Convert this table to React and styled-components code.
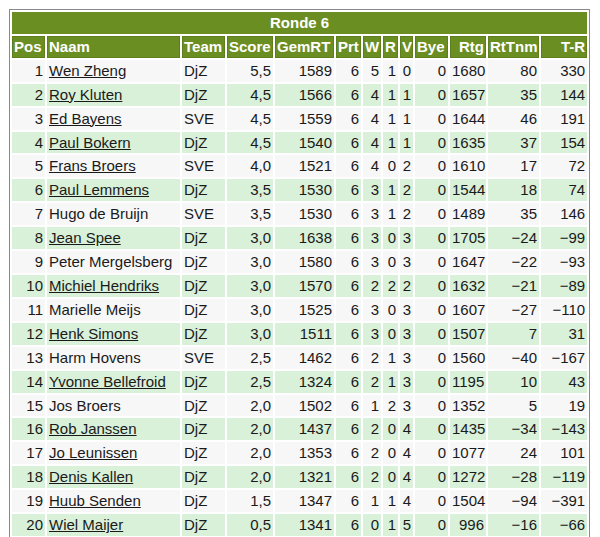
import React from "react";
import styled, { createGlobalStyle } from "styled-components";

const Global = createGlobalStyle`
  html, body { margin: 0; padding: 0; background: #ffffff; }
  body { font-family: "Liberation Sans", Arial, sans-serif; font-size: 15px; color: #1a1a1a; }
`;

const Frame = styled.div`
  margin: 9px 0 0 9px;
  width: 579px;
  border: 1px solid #8a8a8a;
  background: #ffffff;
`;

const Table = styled.table`
  width: 100%;
  table-layout: fixed;
  border-collapse: separate;
  border-spacing: 2px;
  font-size: 15px;
  line-height: 17.9px;
`;

const TitleCell = styled.th`
  background: #6b8e23;
  color: #ffffff;
  font-weight: bold;
  text-align: center;
  padding: 2px;
`;

const HeadCell = styled.th`
  background: #6b8e23;
  color: #ffffff;
  font-weight: bold;
  text-align: ${(p) => p.$align || "left"};
  padding: 1px 1px;
  border: 1px solid #5f7f1c;
  white-space: nowrap;
  overflow: hidden;
`;

const Row = styled.tr`
  background: ${(p) => (p.$even ? "#d9f0d9" : "#f7f7f7")};
`;

const Cell = styled.td`
  padding: 2px 2px;
  text-align: ${(p) => p.$align || "right"};
  white-space: nowrap;
  overflow: hidden;
`;

const PlayerLink = styled.a`
  color: #1a1a1a;
  text-decoration: underline;
`;

const widths = [33, 133, 43, 46, 59, 25, 18, 15, 13, 33, 36, 51, 46];

const headers = [
  ["Pos", "left"],
  ["Naam", "left"],
  ["Team", "left"],
  ["Score", "left"],
  ["GemRT", "left"],
  ["Prt", "left"],
  ["W", "left"],
  ["R", "left"],
  ["V", "left"],
  ["Bye", "left"],
  ["Rtg", "right"],
  ["RtTnm", "left"],
  ["T-R", "right"],
];

const M = "\u2212";

const rows = [
  [1, "Wen Zheng", true, "DjZ", "5,5", 1589, 6, 5, 1, 0, 0, 1680, "80", "330"],
  [2, "Roy Kluten", true, "DjZ", "4,5", 1566, 6, 4, 1, 1, 0, 1657, "35", "144"],
  [3, "Ed Bayens", true, "SVE", "4,5", 1559, 6, 4, 1, 1, 0, 1644, "46", "191"],
  [4, "Paul Bokern", true, "DjZ", "4,5", 1540, 6, 4, 1, 1, 0, 1635, "37", "154"],
  [5, "Frans Broers", true, "SVE", "4,0", 1521, 6, 4, 0, 2, 0, 1610, "17", "72"],
  [6, "Paul Lemmens", true, "DjZ", "3,5", 1530, 6, 3, 1, 2, 0, 1544, "18", "74"],
  [7, "Hugo de Bruijn", false, "SVE", "3,5", 1530, 6, 3, 1, 2, 0, 1489, "35", "146"],
  [8, "Jean Spee", true, "DjZ", "3,0", 1638, 6, 3, 0, 3, 0, 1705, M + "24", M + "99"],
  [9, "Peter Mergelsberg", false, "DjZ", "3,0", 1580, 6, 3, 0, 3, 0, 1647, M + "22", M + "93"],
  [10, "Michiel Hendriks", true, "DjZ", "3,0", 1570, 6, 2, 2, 2, 0, 1632, M + "21", M + "89"],
  [11, "Marielle Meijs", false, "DjZ", "3,0", 1525, 6, 3, 0, 3, 0, 1607, M + "27", M + "110"],
  [12, "Henk Simons", true, "DjZ", "3,0", 1511, 6, 3, 0, 3, 0, 1507, "7", "31"],
  [13, "Harm Hovens", false, "SVE", "2,5", 1462, 6, 2, 1, 3, 0, 1560, M + "40", M + "167"],
  [14, "Yvonne Bellefroid", true, "DjZ", "2,5", 1324, 6, 2, 1, 3, 0, 1195, "10", "43"],
  [15, "Jos Broers", false, "DjZ", "2,0", 1502, 6, 1, 2, 3, 0, 1352, "5", "19"],
  [16, "Rob Janssen", true, "DjZ", "2,0", 1437, 6, 2, 0, 4, 0, 1435, M + "34", M + "143"],
  [17, "Jo Leunissen", true, "DjZ", "2,0", 1353, 6, 2, 0, 4, 0, 1077, "24", "101"],
  [18, "Denis Kallen", true, "DjZ", "2,0", 1321, 6, 2, 0, 4, 0, 1272, M + "28", M + "119"],
  [19, "Huub Senden", true, "DjZ", "1,5", 1347, 6, 1, 1, 4, 0, 1504, M + "94", M + "391"],
  [20, "Wiel Maijer", true, "DjZ", "0,5", 1341, 6, 0, 1, 5, 0, 996, M + "16", M + "66"],
];

export default function App() {
  return (
    <>
      <Global />
      <Frame>
        <Table>
          <colgroup>
            {widths.map((w, i) => (
              <col key={i} style={{ width: w }} />
            ))}
          </colgroup>
          <thead>
            <tr>
              <TitleCell colSpan={13}>Ronde 6</TitleCell>
            </tr>
            <tr>
              {headers.map(([h, a]) => (
                <HeadCell key={h} $align={a}>
                  {h}
                </HeadCell>
              ))}
            </tr>
          </thead>
          <tbody>
            {rows.map((r, i) => {
              const [pos, name, linked, team, ...rest] = r;
              return (
                <Row key={pos} $even={i % 2 === 1}>
                  <Cell>{pos}</Cell>
                  <Cell $align="left">
                    {linked ? <PlayerLink href="#">{name}</PlayerLink> : name}
                  </Cell>
                  <Cell $align="left">{team}</Cell>
                  {rest.map((v, j) => (
                    <Cell key={j}>{v}</Cell>
                  ))}
                </Row>
              );
            })}
          </tbody>
        </Table>
      </Frame>
    </>
  );
}
